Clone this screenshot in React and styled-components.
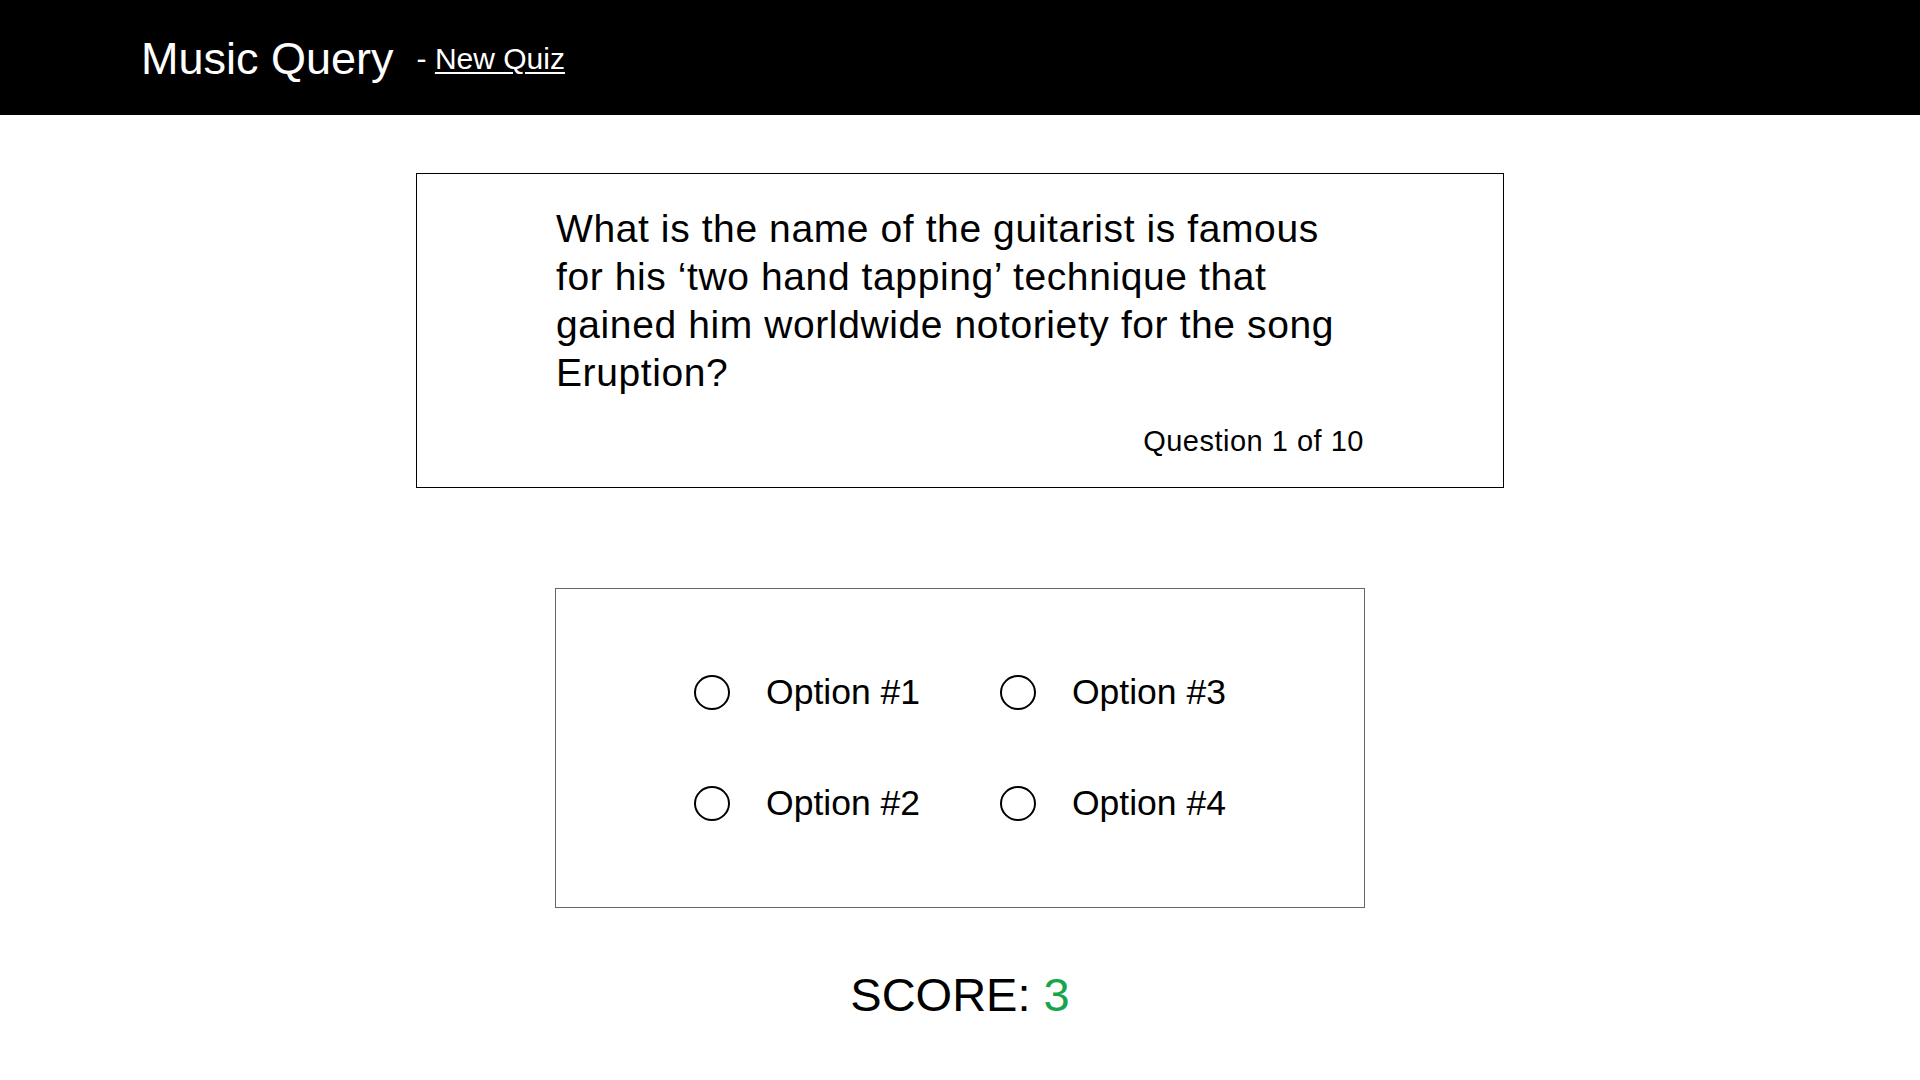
import React, { useState } from 'react'
import styled, { createGlobalStyle } from 'styled-components'

const Global = createGlobalStyle`
  body {
    margin: 0;
    background: #ffffff;
    font-family: "Liberation Sans", Arial, Helvetica, sans-serif;
    color: #000;
  }
`

const Header = styled.header`
  height: 115px;
  box-sizing: border-box;
  background: #000;
  color: #fff;
  display: flex;
  align-items: flex-start;
  padding: 33px 0 0 141px;
`

const Brand = styled.h1`
  margin: 0;
  font-size: 45px;
  font-weight: 400;
  line-height: normal;
`

const Sub = styled.span`
  margin: 9px 0 0 23px;
  font-size: 30px;
  line-height: normal;
  a {
    color: #fff;
    text-decoration: underline;
    text-underline-offset: 3px;
    text-decoration-thickness: 2px;
  }
`

const Main = styled.main`
  display: flex;
  flex-direction: column;
  align-items: center;
  padding-top: 58px;
`

const QuestionCard = styled.section`
  width: 1088px;
  box-sizing: border-box;
  border: 1.3px solid #000;
  padding: 31px 139px 28px;
  display: flex;
  flex-direction: column;
`

const QuestionText = styled.p`
  margin: 0;
  font-size: 39px;
  letter-spacing: 0.6px;
  line-height: 48px;
`

const Counter = styled.div`
  align-self: flex-end;
  margin-top: 26px;
  font-size: 29px;
  letter-spacing: 0.5px;
  line-height: 36px;
`

const OptionsCard = styled.section`
  margin-top: 100px;
  width: 810px;
  height: 320px;
  box-sizing: border-box;
  border: 1px solid #666;
  display: flex;
  align-items: center;
  justify-content: center;
`

const OptionGrid = styled.div`
  display: grid;
  grid-template-rows: 40px 40px;
  grid-auto-flow: column;
  column-gap: 80px;
  row-gap: 71px;
`

const Option = styled.label`
  display: flex;
  align-items: center;
  gap: 36px;
  font-size: 35.5px;
  cursor: pointer;
`

const Radio = styled.span`
  width: 36px;
  height: 35px;
  box-sizing: border-box;
  border: 2.5px solid #000;
  border-radius: 50%;
  display: flex;
  align-items: center;
  justify-content: center;
  &::after {
    content: '';
    width: 16px;
    height: 16px;
    border-radius: 50%;
    background: ${p => (p.$checked ? '#000' : 'transparent')};
  }
`

const Score = styled.div`
  margin-top: 59px;
  font-size: 47px;
  line-height: normal;
  span {
    color: #17a54b;
  }
`

const options = ['Option #1', 'Option #2', 'Option #3', 'Option #4']

function App() {
  const [picked, setPicked] = useState(null)

  return (
    <>
      <Global />
      <Header>
        <Brand>Music Query</Brand>
        <Sub>
          - <a href="#">New Quiz</a>
        </Sub>
      </Header>
      <Main>
        <QuestionCard>
          <QuestionText>
            What is the name of the guitarist is famous for his ‘two hand tapping’ technique that
            gained him worldwide notoriety for the song Eruption?
          </QuestionText>
          <Counter>Question 1 of 10</Counter>
        </QuestionCard>
        <OptionsCard>
          <OptionGrid>
            {options.map((o, i) => (
              <Option key={o} onClick={() => setPicked(i)}>
                <Radio $checked={picked === i} />
                {o}
              </Option>
            ))}
          </OptionGrid>
        </OptionsCard>
        <Score>
          SCORE: <span>3</span>
        </Score>
      </Main>
    </>
  )
}

export default App
